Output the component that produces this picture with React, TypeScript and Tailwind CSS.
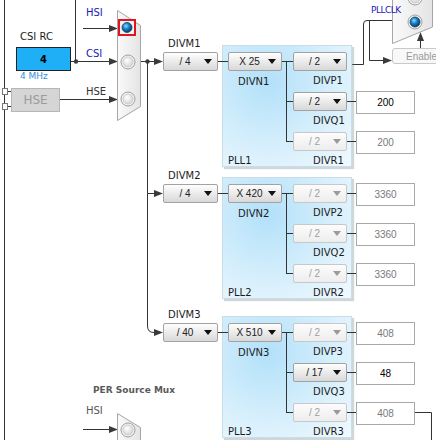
import clsx from 'clsx'

type Row = { v: string; off?: boolean; out?: string; outOff?: boolean }

type Pll = {
  id: number
  gap: string
  divm: string
  divn: string
  rows: Row[]
}

// PLL blocks stack down the canvas, DIVM -> DIVN -> P/Q/R -> outputs
const PLLS: Pll[] = [
  {
    id: 1,
    gap: '',
    divm: '/ 4',
    divn: 'X 25',
    rows: [{ v: '/ 2' }, { v: '/ 2', out: '200' }, { v: '/ 2', off: true, out: '200', outOff: true }],
  },
  {
    id: 2,
    gap: '',
    divm: '/ 4',
    divn: 'X 420',
    rows: [
      { v: '/ 2', off: true, out: '3360', outOff: true },
      { v: '/ 2', off: true, out: '3360', outOff: true },
      { v: '/ 2', off: true, out: '3360', outOff: true },
    ],
  },
  {
    id: 3,
    gap: 'mt-[7px]',
    divm: '/ 40',
    divn: 'X 510',
    rows: [
      { v: '/ 2', off: true, out: '408', outOff: true },
      { v: '/ 17', out: '48' },
      { v: '/ 2', off: true, out: '408', outOff: true },
    ],
  },
]

const LETTERS = ['P', 'Q', 'R']

const arrow = (x: number, y: number) => `M${x - 9} ${y - 3.5}L${x} ${y}L${x - 9} ${y + 3.5}Z`
const arrowUp = (x: number, y: number) => `M${x - 3.5} ${y + 9}L${x} ${y}L${x + 3.5} ${y + 9}Z`

function Drop({ v, off, wide }: { v: string; off?: boolean; wide?: boolean }) {
  return (
    <div
      className={clsx(
        'flex h-[19px] shrink-0 items-center rounded-[2px] border font-["Liberation_Sans",sans-serif] text-[10px] leading-none',
        wide ? 'w-[55px]' : 'w-[54px]',
        off
          ? 'border-[#c8c8c8] bg-[linear-gradient(#fcfcfc,#ededed)] text-[#a0a0a0]'
          : 'border-[#a2a2a2] bg-[linear-gradient(#fefefe,#d8d8d8)] text-[#222]',
      )}
    >
      <span className="flex-1 pl-[2px] text-center">{v}</span>
      <svg width="8" height="5" className="mr-[5px]">
        <path d="M0 0H8L4 5Z" fill={off ? '#9a9a9a' : '#111'} />
      </svg>
    </div>
  )
}

function Radio({ cx, cy, on }: { cx: number; cy: number; on?: boolean }) {
  return (
    <g>
      <circle cx={cx} cy={cy} r={7} fill="#f4f4f4" stroke="#9e9e9e" />
      {on ? (
        <circle cx={cx} cy={cy} r={5} fill="url(#ballOn)" stroke="#0b3e66" strokeWidth={0.8} />
      ) : (
        <circle cx={cx} cy={cy} r={5} fill="url(#ballOff)" stroke="#c4c4c4" strokeWidth={0.8} />
      )}
    </g>
  )
}

function PllGroup({ p }: { p: Pll }) {
  return (
    <div className={clsx('relative flex h-[132px] items-start', p.gap)}>
      {/* DIVM */}
      <div className="flex w-[55px] flex-col gap-[2px]">
        <span className="pl-[5px] text-[10px] leading-[12px] text-[#1c1c1c]">DIVM{p.id}</span>
        <Drop v={p.divm} wide />
      </div>

      {/* PLL panel */}
      <div className="ml-[4px] mt-[7px] flex h-[122px] w-[130px] gap-[11px] border border-[#c9dde8] bg-[radial-gradient(ellipse_at_35%_30%,#b2e0f9,#d6effc_55%,#f1f9fe)] pl-[5px] pt-[6px] shadow-[2px_2px_1px_rgba(120,140,150,0.35)]">
        <div className="flex h-[115px] flex-col">
          <Drop v={p.divn} />
          <span className="mt-[5px] pl-[10px] text-[10px] leading-[12px] text-[#1c1c1c]">DIVN{p.id}</span>
          <span className="mt-auto text-[10px] leading-[12px] text-[#1c1c1c]">PLL{p.id}</span>
        </div>
        <div className="flex flex-col gap-[5px]">
          {p.rows.map((r, i) => (
            <div key={i} className="flex flex-col gap-[4px]">
              <Drop v={r.v} off={r.off} />
              <span className="pl-[20px] text-[10px] leading-[12px] text-[#1c1c1c]">
                DIV{LETTERS[i]}
                {p.id}
              </span>
            </div>
          ))}
        </div>
      </div>

      {/* outputs */}
      <div className="ml-[4px] mt-[13px] flex flex-col gap-[17px]">
        {p.rows.map((r, i) => (
          <div
            key={i}
            className={clsx(
              'flex h-[23px] w-[59px] items-center justify-center font-["Liberation_Sans",sans-serif] text-[10px]',
              r.out && 'border border-[#a9a9a9] bg-white',
              r.outOff ? 'text-[#7a7a7a]' : 'text-black',
            )}
          >
            {r.out}
          </div>
        ))}
      </div>

      <svg className="pointer-events-none absolute left-0 top-0 overflow-visible" width="273" height="132">
        <g transform="translate(-163 0)" stroke="#333" fill="none">
          <path d="M218 23.5H228M282 23.5H293M286.5 23.5V103.5M286 63.5H293M286 103.5H293" />
          {p.rows.map((r, i) => (r.out ? <path key={i} d={`M347 ${23.5 + i * 40}H356`} /> : null))}
        </g>
      </svg>
    </div>
  )
}

export default function App() {
  return (
    <div className="relative h-[440px] w-[436px] overflow-hidden bg-white font-['DejaVu_Sans',sans-serif]">
      <svg className="absolute left-0 top-0" width="436" height="440">
        <defs>
          <radialGradient id="ballOn" cx="40%" cy="35%" r="65%">
            <stop offset="0%" stopColor="#8fdcff" />
            <stop offset="45%" stopColor="#1e86c8" />
            <stop offset="100%" stopColor="#063a62" />
          </radialGradient>
          <radialGradient id="ballOff" cx="40%" cy="35%" r="70%">
            <stop offset="0%" stopColor="#ffffff" />
            <stop offset="100%" stopColor="#d2d2d2" />
          </radialGradient>
          <linearGradient id="mux" x1="0" x2="1" y1="0" y2="0">
            <stop offset="0%" stopColor="#fafafa" />
            <stop offset="100%" stopColor="#e4e4e4" />
          </linearGradient>
        </defs>

        <g stroke="#333" fill="none">
          <path d="M4.5 0V440M75.5 0V62" />
          <path d="M83 28.5H110M71 61.5H110M60 99.5H110" />
          <path d="M7 91.5H11M7 106.5H11" />
          <path d="M141 61.5H154M147.5 61.5V193.5M147.5 193.5H154M147.5 193.5V326Q147.5 332.5 154 332.5" />
          <path d="M347 64.5H363.5V24Q363.5 20.5 367 20.5H394M369.5 21V60.5H384" />
          <path d="M420.5 48V40" />
          <path d="M415 412.5H431.5V440" />
          <path d="M83 429.5H110" />
        </g>
        <g fill="#3a3a3a">
          <path d={arrow(118, 28.5)} />
          <path d={arrow(118, 61.5)} />
          <path d={arrow(118, 99.5)} />
          <path d={arrow(163, 61.5)} />
          <path d={arrow(163, 193.5)} />
          <path d={arrow(163, 332.5)} />
          <path d={arrow(404, 20.5)} />
          <path d={arrow(392, 60.5)} />
          <path d={arrowUp(420.5, 32)} />
          <path d={arrow(118, 429.5)} />
          <circle cx={76} cy={61.5} r={2.2} />
          <circle cx={147.5} cy={61.5} r={2.2} />
        </g>

        {/* source mux */}
        <path d="M117.5 10.5L140.5 25.5V106.5L117.5 120.5Z" fill="url(#mux)" stroke="#a6a6a6" />
        <Radio cx={128} cy={28} />
        <Radio cx={128} cy={62} />
        <Radio cx={128} cy={99} />
        <rect x={119} y={20} width={16} height={15} fill="#f4f4f4" stroke="#e3141b" strokeWidth={2} />
        <circle cx={127} cy={27.5} r={5} fill="url(#ballOn)" stroke="#0b3e66" strokeWidth={0.8} />

        {/* PLLCLK mux */}
        <path d="M392.5 -40L432.5 -20V27L392.5 43.5Z" fill="url(#mux)" stroke="#a6a6a6" />
        <Radio cx={415} cy={-2} />
        <Radio cx={415} cy={22} on />

        {/* PER mux */}
        <path d="M117.5 413.5L140.5 427.5V460H117.5Z" fill="url(#mux)" stroke="#a6a6a6" />
        <Radio cx={128} cy={430} />

        {/* HSE pins */}
        <rect x={2.5} y={88.5} width={5} height={6} fill="#fff" stroke="#777" />
        <rect x={2.5} y={103.5} width={5} height={6} fill="#fff" stroke="#777" />
      </svg>

      {/* clock sources */}
      <div className="absolute left-[86px] top-[7px] text-[10px] leading-[12px] text-[#1a1ab8]">HSI</div>
      <div className="absolute left-[86px] top-[48px] text-[10px] leading-[12px] text-[#1a1ab8]">CSI</div>
      <div className="absolute left-[86px] top-[86px] text-[10px] leading-[12px] text-[#333]">HSE</div>

      <div className="absolute left-[16px] top-[31px] flex flex-col">
        <span className="pl-[4px] text-[10px] leading-[12px] text-[#1c1c1c]">CSI RC</span>
        <div className="mt-[4px] flex h-[24px] w-[55px] items-center justify-center border border-[#222] bg-[#1eaff6] text-[10px] font-bold text-black">
          4
        </div>
        <span className="pl-[4px] text-[9px] leading-[11px] text-[#3a8ee4]">4 MHz</span>
      </div>
      <div className="absolute left-[11px] top-[88px] flex h-[24px] w-[49px] items-center justify-center border border-[#b6b6b6] bg-[#d5d5d5] text-[12px] text-[#9c9c9c]">
        HSE
      </div>

      {/* PLLCLK */}
      <div className="absolute left-[371px] top-[5px] text-[9px] leading-[11px] tracking-[-0.5px] text-[#1a1ab8]">PLLCLK</div>
      <div className="absolute left-[392px] top-[48px] flex h-[16px] w-[70px] items-center whitespace-nowrap rounded-[3px] border border-[#c9c9c9] bg-[#f8f8f8] pl-[13px] font-['Liberation_Sans_Narrow','Liberation_Sans',sans-serif] text-[10px] text-[#9a9a9a]">
        Enable CSS
      </div>

      {/* PLL column */}
      <div className="absolute left-[163px] top-[38px] flex flex-col">
        {PLLS.map((p) => (
          <PllGroup key={p.id} p={p} />
        ))}
      </div>

      {/* PER mux */}
      <div className="absolute left-[93px] top-[385px] flex flex-col gap-[9px]">
        <span className="text-[9px] font-bold leading-[11px] text-[#5a5a5a]">PER Source Mux</span>
        <span className="-ml-[7px] text-[10px] leading-[12px] text-[#555]">HSI</span>
      </div>
    </div>
  )
}
